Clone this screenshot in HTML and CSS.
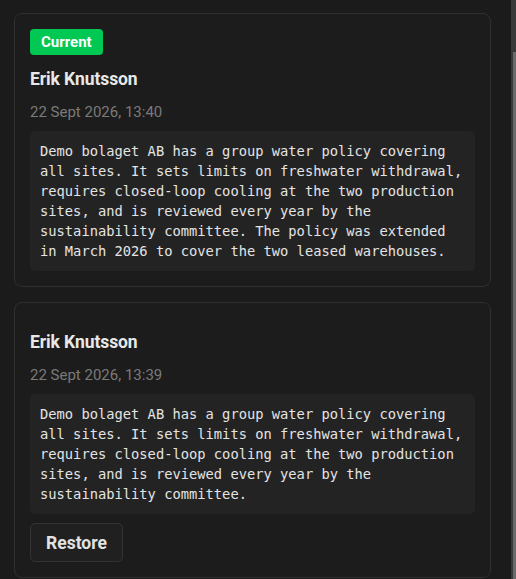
FILE: index.html
```html
<!DOCTYPE html>
<html lang="en">
<head>
<meta charset="utf-8">
<title>Version history</title>
<link rel="stylesheet" href="styles.css">
</head>
<body>
<div class="page">
  <main class="list">
    <section class="card">
      <span class="badge">Current</span>
      <h3 class="author">Erik Knutsson</h3>
      <div class="date">22 Sept 2026, 13:40</div>
      <pre class="content">Demo bolaget AB has a group water policy covering
all sites. It sets limits on freshwater withdrawal,
requires closed-loop cooling at the two production
sites, and is reviewed every year by the
sustainability committee. The policy was extended
in March 2026 to cover the two leased warehouses.</pre>
    </section>
    <section class="card">
      <h3 class="author">Erik Knutsson</h3>
      <div class="date">22 Sept 2026, 13:39</div>
      <pre class="content">Demo bolaget AB has a group water policy covering
all sites. It sets limits on freshwater withdrawal,
requires closed-loop cooling at the two production
sites, and is reviewed every year by the
sustainability committee.</pre>
      <button class="restore" type="button">Restore</button>
    </section>
  </main>
  <div class="scrollbar"><div class="thumb"></div></div>
</div>
</body>
</html>
```
FILE: styles.css
```css
* { box-sizing: border-box; }
html, body { margin: 0; padding: 0; }
body {
  background: #1b1b1b;
  font-family: Roboto, "Noto Sans", sans-serif;
  color: #e6e6e6;
}
.page {
  display: flex;
  height: 579px;
  overflow: hidden;
}
.list {
  flex: 1;
  display: flex;
  flex-direction: column;
  gap: 15px;
  padding: 13px 20px 0 14px;
  min-width: 0;
}
.card {
  display: flex;
  flex-direction: column;
  align-items: flex-start;
  background: #1c1c1c;
  border: 1px solid #2f2f2f;
  border-radius: 8px;
  padding: 15px;
}
.badge {
  display: inline-block;
  height: 26px;
  line-height: 26px;
  padding: 0 11px;
  background: #00c853;
  color: #ffffff;
  font-weight: 700;
  font-size: 15px;
  border-radius: 4px;
}
.author {
  margin: 14px 0 0;
  font-size: 17.5px;
  line-height: 20px;
  font-weight: 700;
  color: #e8e8e8;
  letter-spacing: -0.1px;
}
.date {
  margin-top: 13px;
  font-size: 15px;
  line-height: 20px;
  color: #7a7a7a;
}
.content {
  align-self: stretch;
  margin: 9px 0 0;
  padding: 10px;
  background: #232323;
  border-radius: 5px;
  font-family: "DejaVu Sans Mono", "Liberation Mono", monospace;
  font-size: 13.75px;
  line-height: 20px;
  color: #e4e4e4;
  white-space: pre;
}
.restore {
  margin-top: 9px;
  height: 39px;
  padding: 0 15px;
  background: #202020;
  border: 1px solid #333333;
  border-radius: 5px;
  color: #e2e2e2;
  font-family: Roboto, "Noto Sans", sans-serif;
  font-weight: 700;
  font-size: 17.5px;
}
.scrollbar {
  width: 5px;
  flex: none;
  background: #393939;
  display: flex;
  flex-direction: column;
  align-items: flex-end;
  padding-top: 52px;
}
.thumb {
  flex: 1;
  width: 3px;
  background: #6a6a6a;
}
```
